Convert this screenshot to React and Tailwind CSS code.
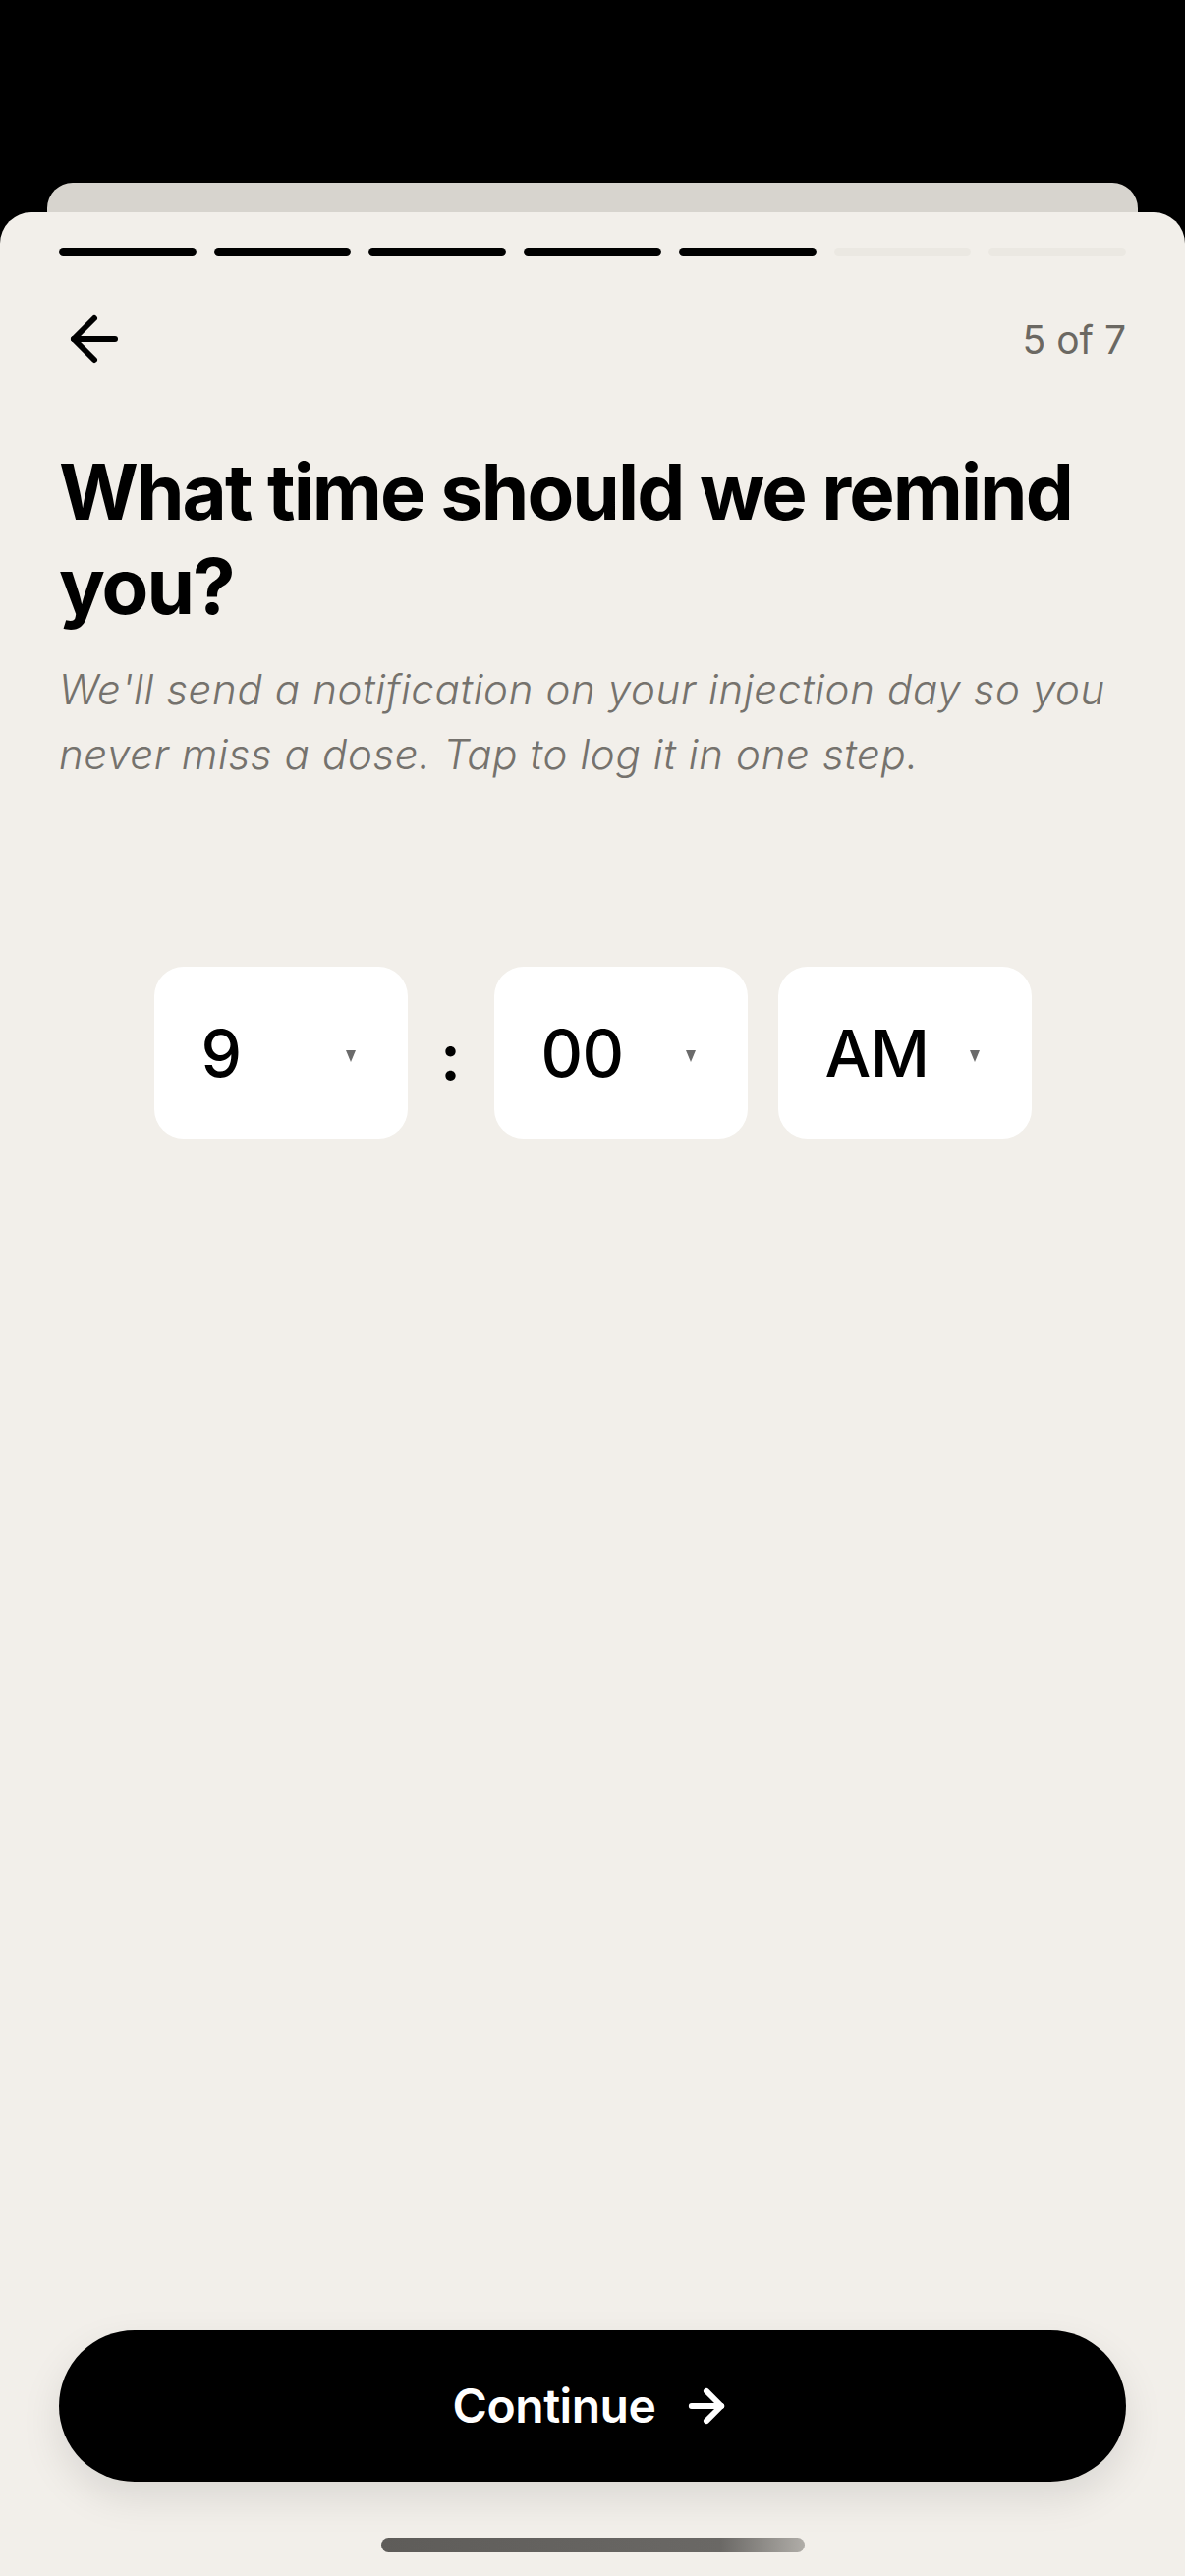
import React from "react";
import { ArrowLeft, ArrowRight } from "lucide-react";

const font = { fontFamily: "Inter, 'Liberation Sans', 'Noto Sans', sans-serif" };

function Caret() {
  return (
    <svg width="10" height="12" viewBox="0 0 10 12" className="mt-[6px] shrink-0">
      <polygon points="0,0 10,0 5,12" fill="#6b6b6b" />
    </svg>
  );
}

function Picker({ value }) {
  return (
    <div className="w-[258px] h-[175px] rounded-[30px] bg-white flex items-center justify-between pl-[48px] pr-[53px]">
      <span className="text-[66px] leading-none font-medium text-black tracking-[-0.01em]">{value}</span>
      <Caret />
    </div>
  );
}

export default function App() {
  const bars = [1, 1, 1, 1, 1, 0, 0];
  return (
    <div style={font} className="w-[1206px] h-[2622px] bg-black flex flex-col overflow-hidden">
      <div className="h-[186px] shrink-0" />
      <div className="mx-[48px] h-[60px] shrink-0 rounded-t-[26px] bg-[#d7d4ce]" />
      <div className="-mt-[30px] flex-1 flex flex-col bg-[#f2efea] rounded-t-[32px] px-[60px] relative">
        <div className="pt-[36px] flex gap-[18px]">
          {bars.map((b, i) => (
            <div
              key={i}
              className={b ? "flex-1 h-[9px] rounded-full bg-black" : "flex-1 h-[9px] rounded-full bg-[#ebe8e2]"}
            />
          ))}
        </div>
        <div className="mt-[48px] h-[72px] flex items-center justify-between">
          <ArrowLeft size={72} strokeWidth={2} color="#000" />
          <span className="text-[39px] leading-none text-[#6b6862] font-normal">5 of 7</span>
        </div>
        <h1 className="mt-[72px] text-[78px] leading-[96px] font-bold text-black tracking-[-0.025em]">
          What time should we remind you?
        </h1>
        <p className="mt-[24px] text-[42px] leading-[66px] italic font-light text-[#75726d] tracking-[0.015em]">
          We'll send a notification on your injection day so you never miss a dose. Tap to log it in one step.
        </p>
        <div className="mt-[183px] flex items-center justify-center gap-[32px]">
          <Picker value="9" />
          <span className="w-[24px] text-center text-[66px] leading-none font-semibold text-black mt-[6px]">:</span>
          <div className="flex gap-[31px]">
            <Picker value="00" />
            <Picker value="AM" />
          </div>
        </div>
        <div className="flex-1" />
        <button className="h-[154px] w-full rounded-full bg-black text-white flex items-center justify-center gap-[26px] shadow-[0_16px_40px_rgba(0,0,0,0.10)]">
          <span className="text-[48px] font-semibold leading-none tracking-[-0.01em]">Continue</span>
          <ArrowRight size={52} strokeWidth={2.75} color="#fff" />
        </button>
        <div className="mt-[57px] mb-[24px] mx-auto w-[431px] h-[15px] rounded-full bg-[linear-gradient(to_right,#5e5c59_0%,#6a6865_80%,#b0ada8_100%)]" />
      </div>
    </div>
  );
}
